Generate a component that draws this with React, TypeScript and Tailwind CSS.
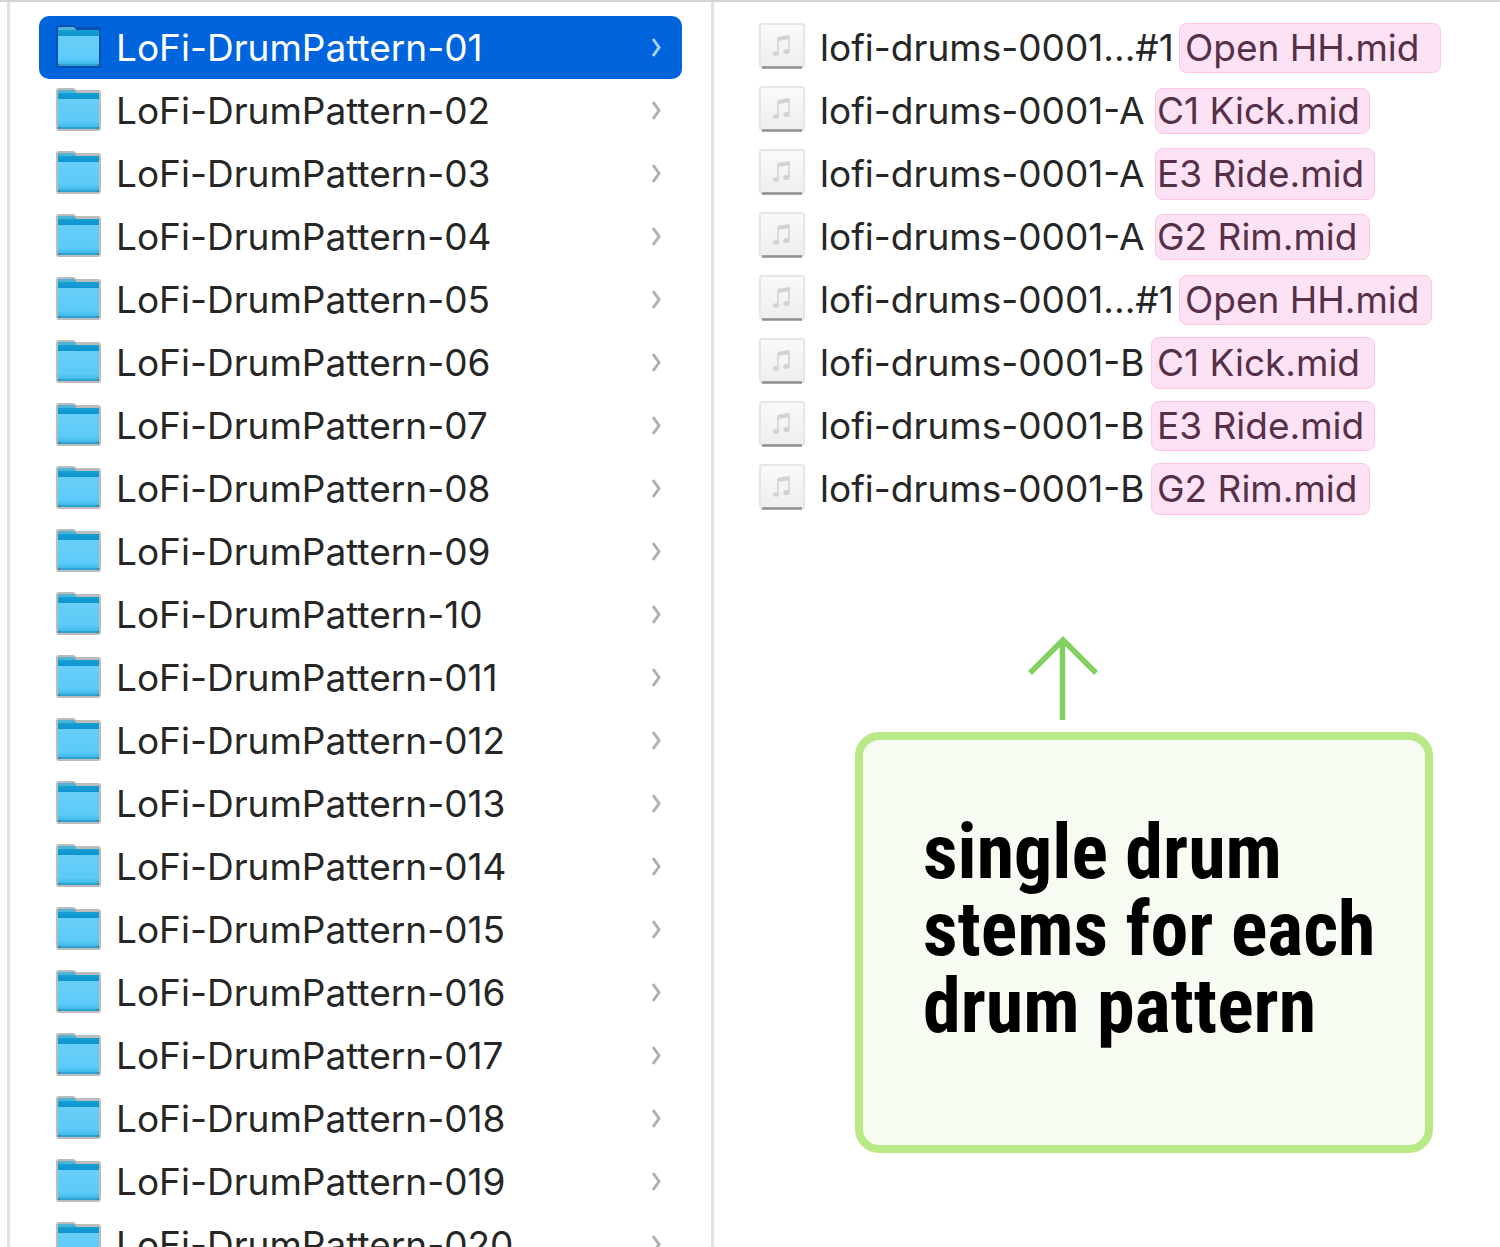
import clsx from "clsx";

const folders = [
  "01", "02", "03", "04", "05", "06", "07", "08", "09", "10",
  "011", "012", "013", "014", "015", "016", "017", "018", "019", "020",
];

const files = [
  { name: "lofi-drums-0001...#1", stem: "Open HH.mid", nameWidth: "w-[358px]", tag: "w-[262px] h-[50px] pl-[5px]" },
  { name: "lofi-drums-0001-A", stem: "C1 Kick.mid", nameWidth: "w-[334px]", tag: "w-[215px] h-[46px] pl-px" },
  { name: "lofi-drums-0001-A", stem: "E3 Ride.mid", nameWidth: "w-[334px]", tag: "w-[220px] h-[52px] pl-px" },
  { name: "lofi-drums-0001-A", stem: "G2 Rim.mid", nameWidth: "w-[334px]", tag: "w-[215px] h-[46px] pl-px" },
  { name: "lofi-drums-0001...#1", stem: "Open HH.mid", nameWidth: "w-[358px]", tag: "w-[253px] h-[50px] pl-[5px]" },
  { name: "lofi-drums-0001-B", stem: "C1 Kick.mid", nameWidth: "w-[330px]", tag: "w-[224px] h-[52px] pl-[5px]" },
  { name: "lofi-drums-0001-B", stem: "E3 Ride.mid", nameWidth: "w-[330px]", tag: "w-[224px] h-[50px] pl-[5px]" },
  { name: "lofi-drums-0001-B", stem: "G2 Rim.mid", nameWidth: "w-[330px]", tag: "w-[219px] h-[52px] pl-[5px]" },
];

const FolderIcon = ({ selected }: { selected: boolean }) => (
  <svg width="46" height="46" viewBox="0 0 46 46" className="shrink-0" aria-hidden="true">
    <defs>
      <linearGradient id="folderFront" x1="0" y1="0" x2="0" y2="1">
        <stop offset="0" stopColor="#69cef7" />
        <stop offset="0.75" stopColor="#5ccbf7" />
        <stop offset="1" stopColor="#36b2e4" />
      </linearGradient>
      <linearGradient id="folderBack" x1="0" y1="0" x2="0" y2="1">
        <stop offset="0" stopColor="#1ba5d6" />
        <stop offset="1" stopColor="#078fcd" />
      </linearGradient>
    </defs>
    <path
      d="M0 3Q0 0 3 0H17Q19 0 20 2H42Q45 2 45 5V40Q45 43 42 43H3Q0 43 0 40Z"
      fill={selected ? "#0650ae" : "#bcbcbc"}
    />
    <path d="M2 4Q2 2 4 2H17Q19 2 20 5H43V14H2Z" fill="url(#folderBack)" />
    <path d="M2 4Q2 2 4 2H17Q19 2 20 5H2Z" fill="#4db4d6" />
    <path d="M2 11H43V39Q43 41 41 41H4Q2 41 2 39Z" fill="url(#folderFront)" />
    <path d="M4 40H41" stroke="#2ea3d2" strokeWidth="2" />
    <path d="M2 39H4V41H2ZM41 39H43V41H41Z" fill="#4a7f99" />
  </svg>
);

const MidiIcon = () => (
  <svg width="46" height="50" viewBox="0 0 46 50" className="shrink-0" aria-hidden="true">
    <defs>
      <linearGradient id="paper" x1="0" y1="0" x2="0" y2="1">
        <stop offset="0" stopColor="#fafafa" />
        <stop offset="1" stopColor="#eeeeee" />
      </linearGradient>
    </defs>
    <rect x="1" y="1" width="44" height="43" rx="2" fill="url(#paper)" stroke="#e6e6e6" strokeWidth="2" />
    <path d="M3 44.5H43" stroke="#8e8e8e" strokeWidth="2.6" />
    <path d="M19 30V15.5L30 13.5V28" fill="none" stroke="#dadada" strokeWidth="2" />
    <path d="M19 16L30 14" stroke="#d2d2d2" strokeWidth="4" />
    <ellipse cx="17" cy="30.5" rx="3" ry="2.2" fill="#d2d2d2" />
    <ellipse cx="27.5" cy="28.5" rx="3.2" ry="2.6" fill="#d2d2d2" />
  </svg>
);

const Chevron = () => (
  <svg width="12" height="22" viewBox="0 0 12 22" className="shrink-0" aria-hidden="true">
    <path d="M3 2L9 10.5L3 19" fill="none" stroke="currentColor" strokeWidth="3" />
  </svg>
);

const App = () => {
  return (
    <main className="grid h-screen grid-cols-[7px_704fr_789fr] overflow-hidden border-t-2 border-[#d4d4d4] bg-white font-['Inter',sans-serif] text-[37px] leading-[46px] text-[#262626]">
      <div />

      {/* Folder column */}
      <ul className="border-l-3 border-[#e2e2e2] px-[29px] pt-[14px]">
        {folders.map((number, i) => (
          <li key={number}>
            <button
              type="button"
              className={clsx(
                "flex h-[63px] w-full items-center rounded-[10px] pr-5 pl-[17px] text-left",
                i === 0 ? "bg-[#0064dc] text-white" : "bg-white",
              )}
            >
              <FolderIcon selected={i === 0} />
              <span className="ml-[14px] grow whitespace-nowrap">LoFi-DrumPattern-{number}</span>
              <span className={i === 0 ? "text-[#a9cbf4]" : "text-[#b0b0b0]"}>
                <Chevron />
              </span>
            </button>
          </li>
        ))}
      </ul>

      {/* File column */}
      <section className="border-l-3 border-[#e2e2e2] pt-[14px]">
        <ul>
          {files.map((file, i) => (
            <li key={i} className="flex h-[63px] items-center pl-[45px] whitespace-nowrap">
              <MidiIcon />
              <span className={clsx("ml-[15px] shrink-0", file.nameWidth)}>{file.name}</span>
              <span
                className={clsx(
                  "ml-px flex shrink-0 items-center rounded-lg border border-[#ffc4e6] bg-[#fde1f4] text-[#553047]",
                  file.tag,
                )}
              >
                {file.stem}
              </span>
            </li>
          ))}
        </ul>

        {/* Callout */}
        <div className="mt-[116px] mr-[67px] ml-[141px]">
          <svg width="70" height="84" viewBox="0 0 70 84" className="ml-[173px]" aria-hidden="true">
            <path d="M2 37L35 4L68 37M34.5 4V84" fill="none" stroke="#82d160" strokeWidth="5.5" />
          </svg>
          <div className="mt-3 rounded-3xl border-8 border-[#b8e986] bg-[#f7fcf2] pt-[74px] pb-[100px] pl-[60px]">
            <p className="font-['Roboto_Condensed','Liberation_Sans',sans-serif] text-[76px] leading-[77px] font-bold whitespace-nowrap text-black">
              single drum
              <br />
              stems for each
              <br />
              drum pattern
            </p>
          </div>
        </div>
      </section>
    </main>
  );
};

export default App;
